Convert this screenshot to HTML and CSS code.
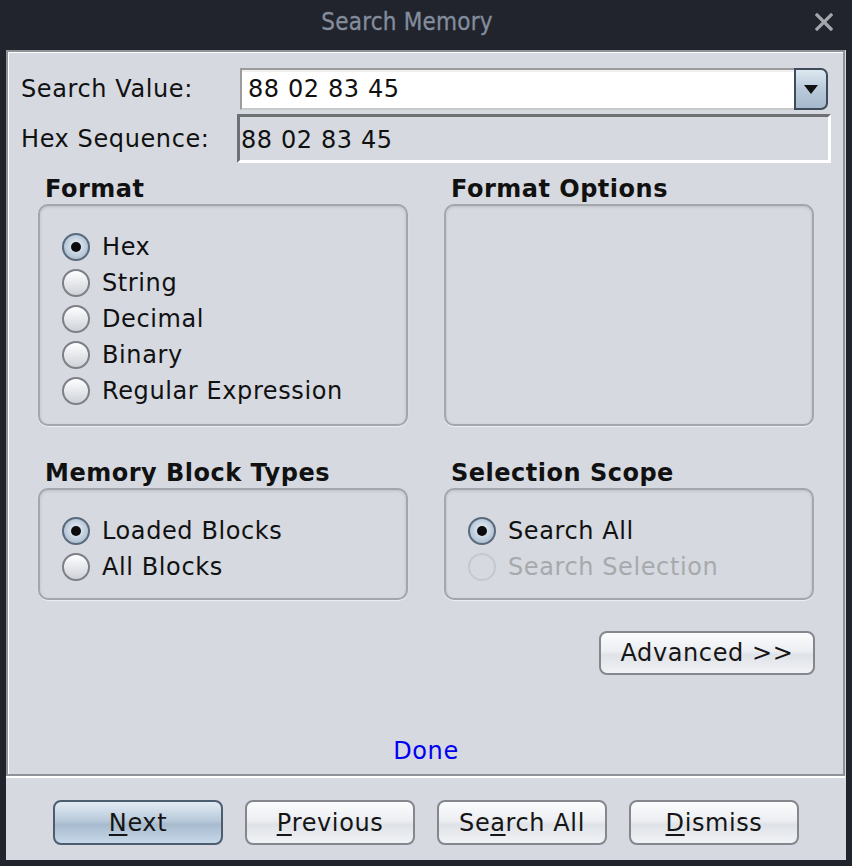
FILE: index.html
```html
<!DOCTYPE html>
<html>
<head>
<meta charset="utf-8">
<link rel="stylesheet" href="styles.css">
</head>
<body>
<div class="window">
  <div class="titlebar">
    <div class="title-spacer"></div>
    <div class="title">Search Memory</div>
    <div class="title-close">
      <svg width="18" height="18" viewBox="0 0 18 18"><path d="M2 2 L16 16 M16 2 L2 16" stroke="#a3a6ad" stroke-width="3.2" stroke-linecap="square"/></svg>
    </div>
  </div>
  <div class="frame">
    <div class="main">
      <div class="fields">
        <div class="label">Search Value:</div>
        <div class="combo">
          <div class="combo-text">88 02 83 45</div>
          <div class="combo-btn"><svg width="14" height="9" viewBox="0 0 14 9"><path d="M0 0 H14 L7 9 Z" fill="#111"/></svg></div>
        </div>
        <div class="label">Hex Sequence:</div>
        <div class="hexfield">88 02 83 45</div>
      </div>
      <div class="groups">
        <div class="group">
          <div class="group-title">Format</div>
          <div class="group-box">
            <div class="radio-row"><span class="radio on"></span><span>Hex</span></div>
            <div class="radio-row"><span class="radio"></span><span>String</span></div>
            <div class="radio-row"><span class="radio"></span><span>Decimal</span></div>
            <div class="radio-row"><span class="radio"></span><span>Binary</span></div>
            <div class="radio-row"><span class="radio"></span><span>Regular Expression</span></div>
          </div>
        </div>
        <div class="group">
          <div class="group-title">Format Options</div>
          <div class="group-box"></div>
        </div>
        <div class="group">
          <div class="group-title">Memory Block Types</div>
          <div class="group-box small">
            <div class="radio-row"><span class="radio on"></span><span>Loaded Blocks</span></div>
            <div class="radio-row"><span class="radio"></span><span>All Blocks</span></div>
          </div>
        </div>
        <div class="group">
          <div class="group-title">Selection Scope</div>
          <div class="group-box small">
            <div class="radio-row"><span class="radio on"></span><span>Search All</span></div>
            <div class="radio-row disabled"><span class="radio dis"></span><span>Search Selection</span></div>
          </div>
        </div>
      </div>
      <div class="adv-row">
        <div class="btn adv">Advanced &gt;&gt;</div>
      </div>
      <div class="status">Done</div>
    </div>
    <div class="footer">
      <div class="btn default"><span class="u">N</span>ext</div>
      <div class="btn"><span class="u">P</span>revious</div>
      <div class="btn">Se<span class="u">a</span>rch All</div>
      <div class="btn"><span class="u">D</span>ismiss</div>
    </div>
  </div>
</div>
</body>
</html>
```

FILE: styles.css
```css
* { box-sizing: border-box; }
html, body {
  margin: 0;
  padding: 0;
  background: #21242c;
}
body {
  width: 852px;
  height: 866px;
  overflow: hidden;
  font-family: "DejaVu Sans", sans-serif;
  font-size: 24px;
  letter-spacing: 0.6px;
  color: #111;
}
.window {
  width: 852px;
  height: 866px;
  display: flex;
  flex-direction: column;
}
.titlebar {
  height: 50px;
  display: grid;
  grid-template-columns: 1fr auto 1fr;
  align-items: start;
  padding-top: 8px;
}
.title {
  font-family: "DejaVu Sans Condensed", "DejaVu Sans", sans-serif;
  font-stretch: condensed;
  font-size: 24px;
  letter-spacing: 0.2px;
  line-height: 28px;
  color: #838d9d;
  margin-right: 38px;
  -webkit-text-stroke: 0.3px #838d9d;
}
.title-close {
  justify-self: end;
  padding-right: 19px;
  padding-top: 5px;
  display: flex;
}
.frame {
  margin: 0 6px;
  height: 810px;
  background: #d6d9e0;
  display: flex;
  flex-direction: column;
}
.main {
  height: 726px;
  margin-right: 1px;
  border: 2px solid #8f9298;
  box-shadow: inset 1px 1px 0 #fff, 0 2px 0 #fff;
  display: flex;
  flex-direction: column;
  padding: 16px 12px 9px 13px;
}
.fields {
  display: grid;
  grid-template-columns: 216px 1fr;
  row-gap: 4px;
  align-items: center;
}
.label {
  line-height: 28px;
}
.combo {
  margin: 0 3px;
  height: 42px;
  display: flex;
}
.combo-text {
  flex: 1;
  background: #fff;
  border-top: 2px solid #9b9b9b;
  border-left: 2px solid #9b9b9b;
  border-bottom: 2px solid #c9cacc;
  box-shadow: inset 0 2px 0 #f0f0f0;
  padding-left: 6px;
  line-height: 39px;
}
.combo-btn {
  width: 34px;
  border: 2px solid #3d4b5b;
  border-radius: 0 7px 7px 0;
  background: linear-gradient(#dfe8f0, #b9cadb 50%, #a6b9cb);
  display: flex;
  align-items: center;
  justify-content: center;
}
.hexfield {
  height: 49px;
  border-top: 3px solid #6f7074;
  border-left: 3px solid #6f7074;
  border-right: 3px solid #fff;
  border-bottom: 3px solid #fff;
  padding-left: 1px;
  padding-top: 3px;
  line-height: 40px;
}
.groups {
  margin: 12px 17px 0 17px;
  display: grid;
  grid-template-columns: 370px 370px;
  column-gap: 36px;
  row-gap: 33px;
}
.group {
  display: flex;
  flex-direction: column;
}
.group-title {
  font-weight: bold;
  letter-spacing: 0.5px;
  line-height: 28px;
  height: 29px;
  padding-left: 7px;
}
.group-box {
  height: 222px;
  border: 2px solid #a3a6ab;
  border-radius: 10px;
  box-shadow: inset 0 1px 3px rgba(0,0,0,0.12), 0 1px 1px rgba(255,255,255,0.6);
  padding: 23px 0 0 22px;
}
.group-box.small {
  height: 112px;
}
.radio-row {
  height: 36px;
  display: flex;
  align-items: center;
  gap: 12px;
  line-height: 28px;
}
.radio-row.disabled {
  color: #a7a9ad;
}
.radio {
  flex: none;
  width: 28px;
  height: 28px;
  border-radius: 50%;
  border: 2px solid #7c7f85;
  background: linear-gradient(#ffffff, #e8eaee 45%, #cfd2d7);
  display: flex;
  align-items: center;
  justify-content: center;
}
.radio.on {
  border-color: #5a6a7c;
  background: radial-gradient(circle at 50% 45%, #d4dfea 30%, #a9bccf 80%);
}
.radio.on::after {
  content: "";
  width: 10px;
  height: 10px;
  border-radius: 50%;
  background: #0c0c0c;
}
.radio.dis {
  border-color: #c6c8cc;
  background: #d6d9e0;
}
.adv-row {
  display: flex;
  justify-content: flex-end;
  margin-top: 31px;
  padding-right: 16px;
}
.btn {
  width: 170px;
  height: 45px;
  border: 2px solid #84878d;
  border-radius: 8px;
  background: linear-gradient(#fbfcfd, #eceef2 45%, #dfe2e7 55%, #f1f3f6);
  display: flex;
  align-items: center;
  justify-content: center;
  line-height: 28px;
  color: #151515;
}
.btn.adv {
  width: 216px;
  height: 44px;
}
.btn.default {
  border-color: #4c5d70;
  background: linear-gradient(#e3ebf3, #b8cadb 45%, #a8bbce 55%, #c6d7e8);
}
.u {
  text-decoration: underline;
  text-underline-offset: 3px;
  text-decoration-thickness: 2px;
}
.status {
  margin-top: auto;
  text-align: center;
  color: #0000f0;
  line-height: 28px;
}
.footer {
  flex: 1;
  margin-top: 2px;
  display: flex;
  justify-content: center;
  align-items: flex-start;
  gap: 22px;
  padding-top: 22px;
}
```
